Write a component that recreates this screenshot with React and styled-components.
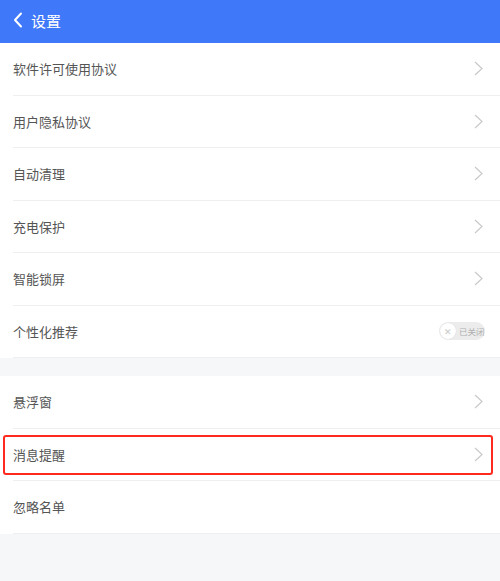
import React from "react";
import styled, { createGlobalStyle } from "styled-components";

const GlobalStyle = createGlobalStyle`
  html, body {
    margin: 0;
    padding: 0;
    background: #f6f7f9;
    font-family: "Noto Sans CJK SC", "Noto Sans", sans-serif;
  }
`;

const Page = styled.div`
  min-height: 581px;
  background: #f6f7f9;
`;

const Header = styled.header`
  height: 43px;
  background: #3f78f8;
  display: flex;
  align-items: center;
  padding: 0 0 3px 13px;
  box-sizing: border-box;
  gap: 8px;
  color: #fff;
`;

const Title = styled.span`
  font-size: 15px;
  line-height: 1;
  color: #fff;
`;

const Section = styled.section`
  background: #fff;
  margin-bottom: ${(p) => p.gap || 0}px;
`;

const Row = styled.div`
  position: relative;
  height: 52.5px;
  display: flex;
  align-items: center;
  justify-content: space-between;
  padding: 0 17px 1px 13px;
  box-sizing: border-box;

  &::after {
    content: "";
    position: absolute;
    left: 13px;
    right: 0;
    bottom: 0;
    height: 1px;
    background: #eeeff1;
  }
`;

const Label = styled.span`
  font-size: 13px;
  line-height: 1;
  color: #555;
`;

const Highlight = styled.div`
  position: absolute;
  left: 3px;
  right: 7px;
  top: 6px;
  bottom: 6px;
  border: 2px solid #ff2a1f;
  border-radius: 3px;
  pointer-events: none;
`;

const Toggle = styled.div`
  width: 46px;
  height: 18px;
  border-radius: 9px;
  background: #ececec;
  display: flex;
  align-items: center;
  gap: 3px;
  padding-left: 1px;
  box-sizing: border-box;
  margin-right: -2px;
`;

const Knob = styled.div`
  width: 16px;
  height: 16px;
  border-radius: 50%;
  background: #fff;
  box-shadow: 0 0 1px rgba(0, 0, 0, 0.15);
  display: flex;
  align-items: center;
  justify-content: center;
  color: #c8c8c8;
  font-size: 9px;
  line-height: 1;
`;

const ToggleText = styled.span`
  font-size: 8.5px;
  color: #b0b0b0;
  line-height: 1;
`;

const Chevron = () => (
  <svg width="9" height="15" viewBox="0 0 9 15">
    <path d="M1 1 L8 7.5 L1 14" fill="none" stroke="#c9c9c9" strokeWidth="1.2" />
  </svg>
);

const Back = () => (
  <svg width="10" height="16" viewBox="0 0 10 16">
    <path d="M8 1.5 L2 8 L8 14.5" fill="none" stroke="#fff" strokeWidth="2" strokeLinecap="round" strokeLinejoin="round" />
  </svg>
);

const firstGroup = ["软件许可使用协议", "用户隐私协议", "自动清理", "充电保护", "智能锁屏"];

const App = () => (
  <Page>
    <GlobalStyle />
    <Header>
      <Back />
      <Title>设置</Title>
    </Header>
    <Section gap={18}>
      {firstGroup.map((t) => (
        <Row key={t}>
          <Label>{t}</Label>
          <Chevron />
        </Row>
      ))}
      <Row>
        <Label>个性化推荐</Label>
        <Toggle>
          <Knob>✕</Knob>
          <ToggleText>已关闭</ToggleText>
        </Toggle>
      </Row>
    </Section>
    <Section>
      <Row>
        <Label>悬浮窗</Label>
        <Chevron />
      </Row>
      <Row>
        <Label>消息提醒</Label>
        <Chevron />
        <Highlight />
      </Row>
      <Row>
        <Label>忽略名单</Label>
      </Row>
    </Section>
  </Page>
);

export default App;
